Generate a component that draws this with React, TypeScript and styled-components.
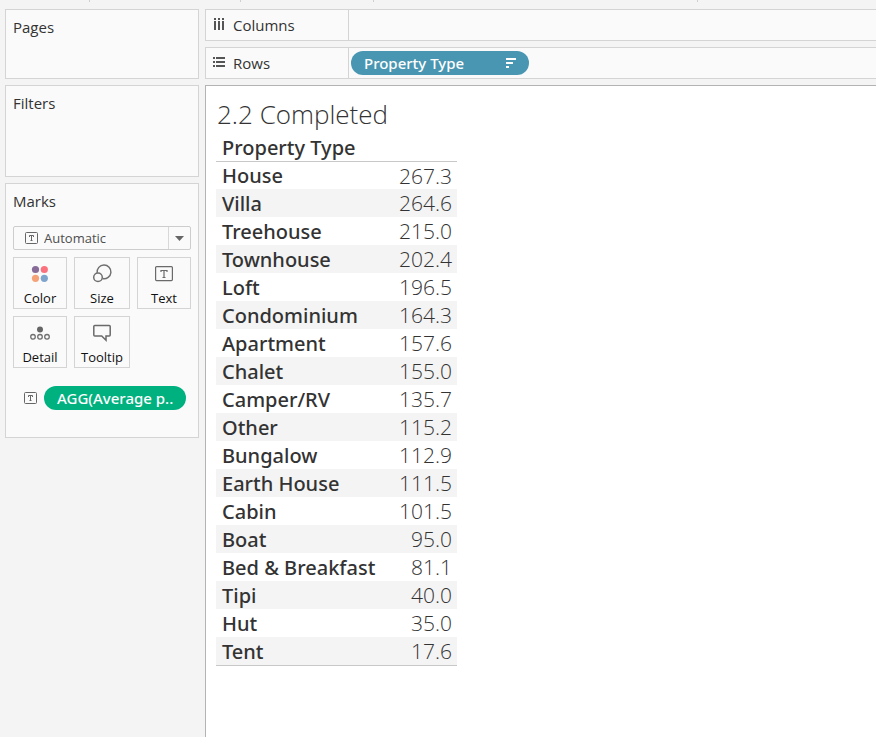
import React from "react";
import styled, { createGlobalStyle } from "styled-components";

const GlobalStyle = createGlobalStyle`
  *, *::before, *::after { box-sizing: border-box; }
  html, body { margin: 0; background: #f4f4f4; }
  body { font-family: "Open Sans", "Noto Sans", sans-serif; color: #333; font-size: 15px; }
  button, select { font: inherit; color: inherit; }
  h1, h2 { margin: 0; font-weight: 400; }
  svg { flex: none; }
`;

const Page = styled.div`
  min-height: 100vh;
  display: flex;
  flex-direction: column;
  overflow: hidden;
`;

const ToolbarEdge = styled.div`
  display: flex;
  height: 9px;
  flex: none;
`;

const ToolGroup = styled.div<{ $width: number }>`
  width: ${(p) => p.$width}px;
  height: 2px;
  flex: none;
  border-right: 1px solid #d0d0d0;
`;

const Workspace = styled.div`
  flex: 1;
  display: grid;
  grid-template-columns: 194px minmax(0, 1fr);
  column-gap: 6px;
  padding-left: 5px;
`;

const Sidebar = styled.aside`
  display: flex;
  flex-direction: column;
  gap: 6px;
`;

const Card = styled.section<{ $height: number }>`
  min-height: ${(p) => p.$height}px;
  padding: 7px;
  border: 1px solid #d4d4d4;
  background: #fafafa;
`;

const CardTitle = styled.h2`
  font-size: 15px;
  line-height: 20px;
`;

const MarkType = styled.div`
  position: relative;
  display: flex;
  height: 24px;
  margin-top: 15px;
`;

const MarkSelect = styled.select`
  appearance: none;
  flex: 1;
  min-width: 0;
  padding: 0 24px 0 30px;
  border: 1px solid #cdcdcd;
  border-radius: 2px;
  background: #fafafa;
  color: #4e4e4e;
  font-size: 13px;
  line-height: 20px;
`;

const MarkGlyph = styled.span`
  position: absolute;
  left: 12px;
  top: 6px;
  display: flex;
  pointer-events: none;
`;

const MarkArrow = styled.span`
  position: absolute;
  right: 1px;
  top: 1px;
  bottom: 1px;
  width: 22px;
  display: flex;
  align-items: center;
  justify-content: center;
  border-left: 1px solid #d8d8d8;
  pointer-events: none;
`;

const MarkGrid = styled.div`
  display: grid;
  grid-template-columns: 54fr 56fr 54fr;
  gap: 7px;
  margin-top: 7px;
`;

const MarkButton = styled.button`
  height: 52px;
  padding: 5px 0 0;
  display: flex;
  flex-direction: column;
  align-items: center;
  gap: 3px;
  border: 1px solid #d4d4d4;
  background: #fafafa;
  color: #111;
  font-size: 13px;
  line-height: 20px;
`;

const Encoding = styled.div`
  display: flex;
  align-items: center;
  gap: 7px;
  margin: 18px 5px 0 11px;
`;

const Pill = styled.button<{ $tone: string; $width?: number }>`
  display: flex;
  align-items: center;
  justify-content: space-between;
  flex: ${(p) => (p.$width ? "none" : "1")};
  width: ${(p) => (p.$width ? `${p.$width}px` : "auto")};
  height: 24px;
  padding: 0 11px 0 13px;
  border: 0;
  border-radius: 12px;
  background: ${(p) => p.$tone};
  color: #fff;
  font-family: "Noto Sans", "Open Sans", sans-serif;
  font-size: 15px;
  font-weight: 500;
  line-height: 24px;
  white-space: nowrap;
`;

const Main = styled.main`
  display: flex;
  flex-direction: column;
  gap: 6px;
`;

const Shelf = styled.section`
  display: flex;
  height: 32px;
  border: 1px solid #d4d4d4;
  border-right: 0;
  background: #fafafa;
`;

const ShelfName = styled.h2`
  width: 143px;
  padding-left: 7px;
  display: flex;
  align-items: center;
  gap: 8px;
  border-right: 1px solid #d4d4d4;
  font-size: 15px;
  line-height: 30px;
`;

const ShelfFields = styled.div`
  display: flex;
  align-items: center;
  padding-left: 2px;
`;

const Sheet = styled.section`
  flex: 1;
  padding: 10px 10px 20px;
  border: solid #b3b3b3;
  border-width: 1px 0 0 1px;
  background: #fff;
`;

const SheetTitle = styled.h1`
  padding: 0 0 2px 1px;
  font-size: 26px;
  font-weight: 300;
  line-height: 36px;
`;

const DataTable = styled.table`
  width: 241px;
  border-spacing: 0;
  border-bottom: 1px solid #c8c8c8;
  font-size: 20px;
  line-height: 26px;
`;

const HeadCell = styled.th`
  height: 28px;
  padding: 1px 6px 0;
  border-bottom: 1px solid #c8c8c8;
  text-align: left;
  font-family: "Noto Sans", "Open Sans", sans-serif;
  font-weight: 500;
`;

const Row = styled.tr`
  height: 28px;
  &:first-child { height: 27px; }
  &:nth-child(even) { background: #f4f4f4; }
`;

const NameCell = styled.th`
  padding: 1px 0 0 6px;
  text-align: left;
  font-family: "Noto Sans", "Open Sans", sans-serif;
  font-weight: 500;
  white-space: nowrap;
`;

const ValueCell = styled.td`
  padding: 0 5px 0 0;
  text-align: right;
  font-size: 21px;
  font-weight: 300;
`;

const TextIcon = ({ w, h }: { w: number; h: number }) => (
  <svg width={w} height={h} viewBox={`0 0 ${w} ${h}`} fill="none" stroke="#666">
    <rect x=".5" y=".5" width={w - 1} height={h - 1} rx="1" />
    <path d="M4.5 5V3.5h4V5M6.5 3.5v5M5.5 8.5h2" />
  </svg>
);

const ColorIcon = () => (
  <svg width="18" height="22" viewBox="0 0 18 22">
    <circle cx="4.5" cy="6.5" r="3.6" fill="#876b98" />
    <circle cx="13.3" cy="6.5" r="3.6" fill="#fb727e" />
    <circle cx="4.5" cy="15.3" r="3.6" fill="#f5a278" />
    <circle cx="13.3" cy="15.3" r="3.6" fill="#7fa4cc" />
  </svg>
);

const SizeIcon = () => (
  <svg width="20" height="22" viewBox="0 0 20 22" fill="none" stroke="#707070" strokeWidth="1.5">
    <path d="M5.2 9.8a6.9 6.9 0 1 1 5.4 5.8" />
    <circle cx="6" cy="14.2" r="4.3" />
  </svg>
);

const LabelIcon = () => (
  <svg width="18" height="22" viewBox="0 -3 18 22" fill="none" stroke="#6a6a6a" strokeWidth="1.2">
    <rect x=".6" y=".6" width="16.8" height="14" rx="1" />
    <path d="M6 6V4.5h6V6M9 4.5v7M7.5 11.5h3" />
  </svg>
);

const DetailIcon = () => (
  <svg width="20" height="22" viewBox="0 0 20 22" fill="none" stroke="#707070" strokeWidth="1.3">
    <circle cx="10" cy="7.4" r="3" fill="#666" stroke="none" />
    <circle cx="3" cy="14.8" r="2.3" />
    <circle cx="10" cy="14.8" r="2.3" />
    <circle cx="17" cy="14.8" r="2.3" />
  </svg>
);

const TooltipIcon = () => (
  <svg width="18" height="22" viewBox="0 0 18 22" fill="none" stroke="#6a6a6a" strokeWidth="1.5">
    <path d="M1.8 3.6h14.4q1 0 1 1v8.4q0 1-1 1H13v4.3l-4.3-4.3H1.8q-1 0-1-1V4.6q0-1 1-1Z" />
  </svg>
);

const ColumnsIcon = () => (
  <svg width="12" height="14" viewBox="0 0 12 14" fill="#555">
    <path d="M1 0h2v2H1zM5 0h2v2H5zM9 0h2v2H9zM1 3h2v9H1zM5 3h2v9H5zM9 3h2v9H9z" />
  </svg>
);

const RowsIcon = () => (
  <svg width="12" height="12" viewBox="0 0 12 12" fill="#555">
    <path d="M0 0h2v2H0zM3 0h9v2H3zM0 4h2v2H0zM3 4h9v2H3zM0 8h2v2H0zM3 8h9v2H3z" />
  </svg>
);

const SortIcon = () => (
  <svg width="12" height="10" viewBox="0 0 12 10" fill="#fff">
    <path d="M0 0h10v2H0zM0 4h7v2H0zM0 8h3v2H0z" />
  </svg>
);

const marks = [
  { name: "Color", Icon: ColorIcon },
  { name: "Size", Icon: SizeIcon },
  { name: "Text", Icon: LabelIcon },
  { name: "Detail", Icon: DetailIcon },
  { name: "Tooltip", Icon: TooltipIcon },
];

const rows: [string, string][] = [
  ["House", "267.3"],
  ["Villa", "264.6"],
  ["Treehouse", "215.0"],
  ["Townhouse", "202.4"],
  ["Loft", "196.5"],
  ["Condominium", "164.3"],
  ["Apartment", "157.6"],
  ["Chalet", "155.0"],
  ["Camper/RV", "135.7"],
  ["Other", "115.2"],
  ["Bungalow", "112.9"],
  ["Earth House", "111.5"],
  ["Cabin", "101.5"],
  ["Boat", "95.0"],
  ["Bed & Breakfast", "81.1"],
  ["Tipi", "40.0"],
  ["Hut", "35.0"],
  ["Tent", "17.6"],
];

export default function App() {
  return (
    <Page>
      <GlobalStyle />
      <ToolbarEdge>
        {[90, 151, 133, 324].map((width) => (
          <ToolGroup key={width} $width={width} />
        ))}
      </ToolbarEdge>
      <Workspace>
        <Sidebar>
          <Card $height={70}>
            <CardTitle>Pages</CardTitle>
          </Card>
          <Card $height={92}>
            <CardTitle>Filters</CardTitle>
          </Card>
          <Card $height={255}>
            <CardTitle>Marks</CardTitle>
            <MarkType>
              <MarkSelect aria-label="Mark type" defaultValue="Automatic">
                <option>Automatic</option>
              </MarkSelect>
              <MarkGlyph>
                <TextIcon w={13} h={12} />
              </MarkGlyph>
              <MarkArrow>
                <svg width="9" height="5" viewBox="0 0 9 5" fill="#666">
                  <path d="M0 0h9L4.5 5z" />
                </svg>
              </MarkArrow>
            </MarkType>
            <MarkGrid>
              {marks.map(({ name, Icon }) => (
                <MarkButton key={name} type="button">
                  <Icon />
                  {name}
                </MarkButton>
              ))}
            </MarkGrid>
            <Encoding>
              <TextIcon w={13} h={12} />
              <Pill type="button" $tone="#00b180">
                AGG(Average p..
              </Pill>
            </Encoding>
          </Card>
        </Sidebar>
        <Main>
          <Shelf>
            <ShelfName>
              <ColumnsIcon />
              Columns
            </ShelfName>
            <ShelfFields />
          </Shelf>
          <Shelf>
            <ShelfName>
              <RowsIcon />
              Rows
            </ShelfName>
            <ShelfFields>
              <Pill type="button" $tone="#4996b2" $width={178}>
                Property Type
                <SortIcon />
              </Pill>
            </ShelfFields>
          </Shelf>
          <Sheet>
            <SheetTitle>2.2 Completed</SheetTitle>
            <DataTable>
              <thead>
                <tr>
                  <HeadCell colSpan={2}>Property Type</HeadCell>
                </tr>
              </thead>
              <tbody>
                {rows.map(([name, value]) => (
                  <Row key={name}>
                    <NameCell scope="row">{name}</NameCell>
                    <ValueCell>{value}</ValueCell>
                  </Row>
                ))}
              </tbody>
            </DataTable>
          </Sheet>
        </Main>
      </Workspace>
    </Page>
  );
}
